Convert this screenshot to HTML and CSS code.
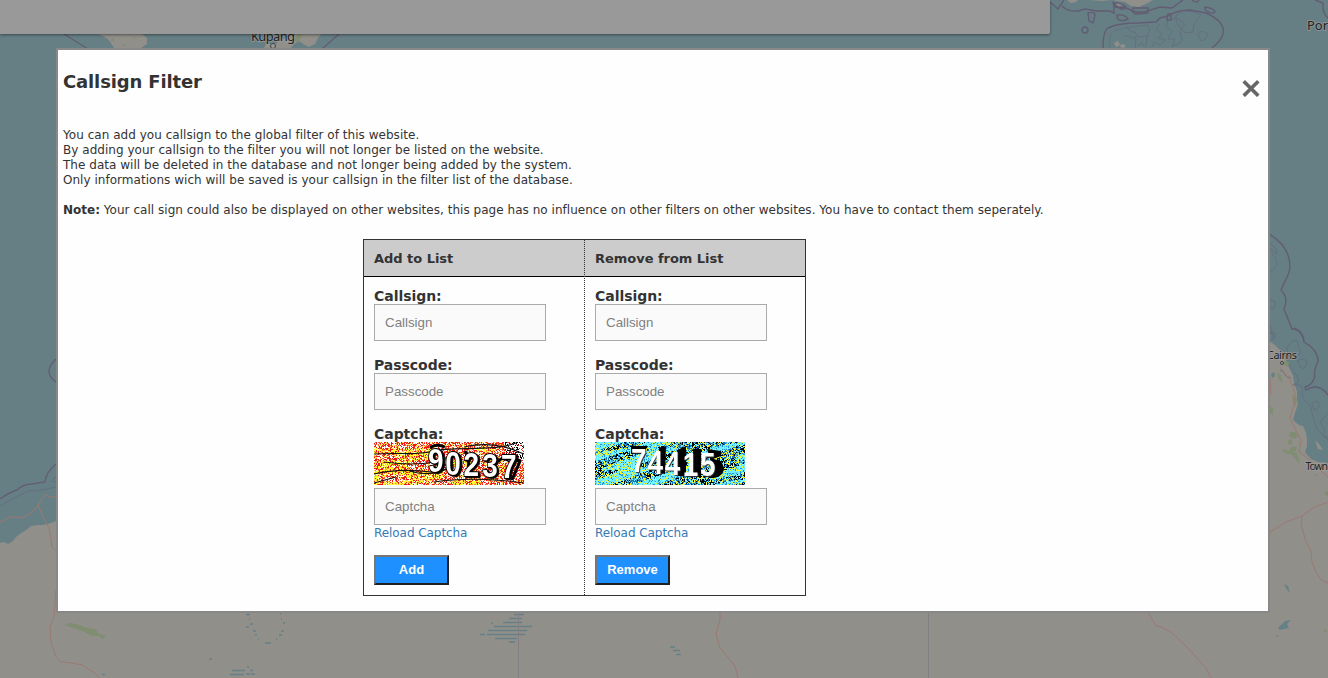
FILE: index.html
```html
<!DOCTYPE html>
<html lang="en">
<head>
<meta charset="utf-8">
<title>Callsign Filter</title>
<link rel="stylesheet" href="styles.css">
</head>
<body>
<svg class="map" viewBox="0 0 1328 678" width="1328" height="678" aria-hidden="true">
  <rect class="sea" width="1328" height="678"/>
  <!-- mainland -->
  <path class="land" d="M0 543 L4 542 8 544 13 541 16 537 20 534 26 530 31 526 37 525 42 525 48 524 56 521 L600 450 L1268 340 L1272 343 1276 346 1280 350 1285 358 1287 364 1291 370 1293 376 1294 383 1297 391 1297 398 1298 404 1295 413 1293 420 1299 425 1304 430 1307 438 1307 446 1305 452 1311 459 1318 462 1328 463 V678 H0Z"/>
  <path class="land" d="M1298 425 l5 1 4 9 -6 -3z M1315 440 l4 4 4 6 -5 -1z"/>
  <!-- northern islands -->
  <path class="land" d="M98 34 L103 36 109 40 114 48 H141 L147 44 147 38 142 34Z M264 48 L266 44 275 44 281 40 289 36 297 32 H323 L318 38 315 44 309 47 303 44 299 41 294 44 291 48Z"/>
  <path class="land" d="M1067 0 l4 3 5-1 2-2z M1088 0 h65 l-5 3-9 4-8-1-6-4-13-2-10 1-14-1z M1114 43 l4-2 2 4-4 2z M1120 45 l4-1 2 3-5 1z M1115 4l6-1 3 2-7 1z"/>
  <path class="green" d="M111 39l3-1 0 3-3 0z M134 36l2 3-3-1z M123 44l4 2-4 0z M298 34l4 0-4 9-4-3z M64 625l7-2 8 2 8 3 8 1 4 5 7 2-4 3-3-3-8 0-6-4-8-3z M1283 449l6 2 8 2 3 10-3-2-5-6-9-3z M1290 432l5 0 3 4-4 3-5-3z M1288 440l4-1 0 6-4-1z M1291 447l6-1-1 5-7 1z M1270 407l3 0 0 8-3-2z M1325 491l3 0 0 5-3-1z M1314 475l3-1 0 2z M1323 629l5 2-3 1z M1277 372l4 4 2 8-5-6z M1284 361l5 1-1 5-4-2z M1292 394l5 5-1 8-3-4z"/>
  <!-- lakes -->
  <path class="lake" d="M1284 584l4 2 2 7-4-5z M1278 628l7-7 6-1-4 4 2 4-9 2z M1276 635l3 1-2 1z M1271 374l3-2 1 4-3 2z"/>
  <path class="lake-dash" d="M246 614.500h4 M249 619h1 M250 624h3 M246 627h3 M253 631h3 M255 635h2 M258 639h1 M265 643h6 M276 639h1 M279 635h3 M281 631h3 M283 623h2 M281 619h1 M280 614h1 M209 659h3 M247 667h2 M232 670.500h13 M250 670.500h3 M230 674.500h14 M246 674h4 M251 674h4 M102 674.500h3"/>
  <path class="lake-dash" d="M514 614.500h10 M509 618.500h13 M503 622.500h19 M491 623h2 M494 626.500h38 M488 630.500h39 M480 634.500h5 M487 634.500h38 M495 638.500h22 M509 642h6"/>
  <path class="lake-dash" d="M670 647h5 M673 650.500h7 M676 654.500h5"/>
  <!-- maritime boundaries -->
  <g class="boundary">
    <path d="M64 34 L88 49 M322 49 L339 34 M56 359 Q49 365 49 372 Q50 378 56 382 M0 499 Q10 492 17 490 Q23 484 32 484 L45 482 Q46 472 56 464"/>
    <path d="M1050 2 L1058 9 1064 0 M1062 6 Q1068 12 1078 11 L1085 9 1097 11 1110 11 1114 13 1114 3 Q1121 12 1126 8 L1136 12 1144 12 1160 7 1172 8 1183 0"/>
    <path d="M1103 48 Q1103 31 1108 28 Q1118 23 1138 23 L1156 22 1160 18 1168 16 Q1177 10 1190 10 L1206 13 Q1226 22 1223 34 Q1221 41 1212 48"/>
    <path d="M1088 13 q7-2 7 2 l-2 8-4-2zM1082 30a3 3 0 1 0 6 0a3 3 0 1 0-6 0 M1117 15q8-1 11 4q-9 4-11-2z M1113 3q8-1 13 4q-8 1-11 0z M1133 8h15v5l-13 1-3-3z M1205 7q9 1 10 5q-4 3-10-2z M1192 0q5 4 7 0 M1168 14h3v6h-4z M1315 0 L1323 3 Q1322 13 1328 18"/>
    <path d="M1269 234 Q1290 246 1290 267 Q1289 275 1285 281 L1281 290 Q1289 298 1284 309 L1290 324 1292 329 Q1301 328 1304 340"/>
    <path d="M1294 328 Q1303 332 1304 342 Q1318 350 1318 361 Q1313 373 1315 376 Q1312 386 1305 387 L1306 390 Q1319 382 1328 395"/>
  </g>
  <g class="reef">
    <path d="M0 506 L14 498 28 491 42 490 56 487 M56 477 q-4 1-3 4q1 2 3 1"/>
    <path d="M1110 48 Q1108 34 1114 31 L1130 27 1148 25 1150 31 1147 35 1146 46 M1124 37q5-3 7 1l5-1-1 11 M1127 26q2 7 8 6l3 5 11-1 M1138 46q5-6 6 1 M1160 24l-4 5 6 5-4 4 8 2-6 5-6-3-2 5 M1168 20l-2 7 6 4-4 8 7 0-3 8 10-6-2-10 5-7-8-6z M1176 15q12-6 20-2l5 2-7 9-1 8-8 1-4-5q-6-4-5-13z M1198 34q3-5 10 0q-2 6-7 7z"/>
    <path d="M1270 243q8 7 7 11q-3 0-7-6 M1272 254q6 5 4 12l-6 7 M1270 300q7 0 5 6q-2 5-5 2 M1270 325l3 10 2 2-3 3 M1269 330l5 7M1287 348q4-8 10-8l2 8 2 5-7 6-6-3z M1297 361q8-4 10 1q-1 8-6 6z M1290 365q0 9 6 9l3 7-6 4q12-2 9 7q0 8 8 13q3 13 7 24l11 11 M1312 404q3-5 7-1q1 6-5 7z M1328 413l-8 9 5 8-2 5 5 3 M1270 333q7-2 5 4l-5 3 M1280 370q4 1 6 6l5 2"/>
  </g>
  <!-- roads -->
  <g class="road">
    <path d="M0 522 L5 520 10 517 17 517 22 518 31 513 37 507 43 498 46 494 49 497 56 497 M38 505 L42 515 49 528 51 540 52 547 56 551 M56 590 L54 616 50 627 51 642 56 657 61 662 72 663 82 665 93 672 100 678"/>
    <path d="M720 612 L720 620 716 634 720 648 735 666 738 678 M1148 612 L1156 626 1161 627 1171 632 1188 648 1206 668 1211 678"/>
    <path d="M1270 532 L1286 522 1302 516 1313 508 1328 502 M1302 516 L1301 524 1306 542 1311 551 1312 562 1316 572 1321 580 1328 583 M1280 367 L1290 380 1295 393 1295 402 1290 418 1296 431 1301 440 1299 452 1310 460 1322 472 1328 477 M1270 378 l1 17"/>
  </g>
  <path class="state-line" d="M518.500 612V678M928.500 612V678"/>
  <g class="place">
    <text x="251" y="41" font-size="13" textLength="44">Kupang</text>
    <text x="1307" y="30" font-size="13">Por</text>
    <text x="1267" y="359" font-size="11" textLength="30">Cairns</text>
    <text x="1305.500" y="470" font-size="10.500" textLength="22.500">Town</text>
  </g>
  <circle class="dot" cx="273" cy="46" r="2.500"/><circle class="dot" cx="1282" cy="363" r="1.500"/>
</svg>
<div class="topbar"></div>
<main class="modal">
  <header class="modal-head">
    <h1>Callsign Filter</h1>
    <svg class="close" viewBox="0 0 18 18" width="18" height="18" role="img" aria-label="Close"><path d="M1.700 2.200 16.300 16.800M16.300 2.200 1.700 16.800"/></svg>
  </header>
  <p class="intro">You can add you callsign to the global filter of this website.<br>By adding your callsign to the filter you will not longer be listed on the website.<br>The data will be deleted in the database and not longer being added by the system.<br>Only informations wich will be saved is your callsign in the filter list of the database.<br><br><b>Note:</b> Your call sign could also be displayed on other websites, this page has no influence on other filters on other websites. You have to contact them seperately.</p>
  <div class="lists">
    <section class="list">
      <h2>Add to List</h2>
      <form class="fields">
        <label>Callsign:</label><input placeholder="Callsign">
        <label>Passcode:</label><input placeholder="Passcode">
        <label>Captcha:</label>
        <div class="captcha">
          <canvas width="150" height="43" data-kind="warm"></canvas>
          <svg class="code" viewBox="0 0 150 43" width="150" height="43">
            <path class="scratch" d="M0 12C30 10 40 14 60 9S120 10 142 1M10 20Q40 24 60 20M0 32Q25 26 58 30M0 41L22 35M35 29Q60 36 78 24M90 5Q120-2 150 12M60 40Q100 34 150 41"/>
            <path class="swash" d="M56 6Q62 1 71 5M92 32Q98 20 91 9M124 20Q132 10 146 19L138 38"/>
            <text class="warm" x="66 87 109 132 155" y="30 33 34 35 36" transform="scale(.82 1)">90237</text>
          </svg>
        </div>
        <input placeholder="Captcha">
        <a>Reload Captcha</a>
        <button type="button">Add</button>
      </form>
    </section>
    <section class="list">
      <h2>Remove from List</h2>
      <form class="fields">
        <label>Callsign:</label><input placeholder="Callsign">
        <label>Passcode:</label><input placeholder="Passcode">
        <label>Captcha:</label>
        <div class="captcha">
          <canvas width="150" height="43" data-kind="cool"></canvas>
          <svg class="code" viewBox="0 0 150 43" width="150" height="43">
            <path class="shadow" d="M36 4H53L48 12H36ZM64 6L71 4 70 32 64 31ZM82 8L91 4V34H83ZM98 7H106V35H98ZM112 7L126 9V14L118 17Q128 18 129 26Q128 37 113 36L119 29Z"/>
            <text class="cool" x="44 64 85 107 128" y="30 32 33 34 34" transform="scale(.82 1)">74415</text>
          </svg>
        </div>
        <input placeholder="Captcha">
        <a>Reload Captcha</a>
        <button type="button">Remove</button>
      </form>
    </section>
  </div>
</main>
<script src="captcha.js"></script>
</body>
</html>
```
FILE: styles.css
```css
* { box-sizing: border-box; }
body {
  margin: 0;
  height: 678px;
  overflow: hidden;
  font: 12px/15px Verdana, "DejaVu Sans", sans-serif;
  color: #333;
}
.map { position: absolute; top: 0; left: 0; }
.sea { fill: #667f85; }
.land { fill: #908f8a; }
.green { fill: #7f8d70; }
.lake { fill: #668087; }
.lake-dash { fill: none; stroke: #668087; stroke-width: 1.6; }
.boundary { fill: none; stroke: #635d73; stroke-width: 1.4; }
.reef { fill: none; stroke: #63687b; stroke-width: .7; }
.road { fill: none; stroke: #9b7970; stroke-width: 1; }
.state-line { stroke: #827e82; stroke-width: 1; }
.place { font-family: "Noto Sans", sans-serif; fill: #222; stroke: #a0a0a0; stroke-width: 2px; stroke-opacity: .6; paint-order: stroke; }
.dot { fill: #999; stroke: #444; stroke-width: 1; }
.topbar {
  position: absolute;
  top: 0;
  left: 0;
  width: 1050px;
  height: 34px;
  background: #999;
  border-radius: 0 0 2px 0;
  box-shadow: 0 1px 3px rgba(0, 0, 0, .45);
}
.modal {
  position: relative;
  width: 1214px;
  height: 565px;
  margin: 48px 0 0 56px;
  padding: 0 5px;
  border: 2px solid #888;
  background: #fefefe;
}
.modal-head { display: flex; justify-content: space-between; height: 78px; padding: 21px 3px 0 0; }
h1 { margin: 0; font-size: 18px; line-height: 22px; letter-spacing: -.14px; }
.close { margin-top: 8px; fill: none; stroke: #666; stroke-width: 3.6; }
.intro { margin: 0; letter-spacing: .032px; }
.intro b { letter-spacing: 0; }
.lists {
  display: grid;
  grid-template-columns: 221px 220px;
  width: 443px;
  height: 357px;
  margin: 21px 0 0 300px;
  border: 1px solid #333;
}
.list + .list { border-left: 1px dotted #333; margin-left: -1px; }
h2 {
  height: 37px;
  margin: 0;
  padding: 0 10px;
  border-bottom: 1px solid #000;
  background: #ccc;
  font-size: 13px;
  line-height: 37px;
  letter-spacing: -.03px;
}
.fields { display: flex; flex-direction: column; align-items: flex-start; padding: 10px; }
label { height: 17px; font-size: 14px; font-weight: bold; line-height: 18px; letter-spacing: -.04px; }
input {
  width: 172px;
  height: 37px;
  margin: 0 0 15px;
  padding: 0 10px;
  border: 1px solid #aaa;
  background: #fafafa;
  font: 13.333px "Liberation Sans", Arial, sans-serif;
}
input::placeholder { color: #808080; opacity: 1; }
.captcha { position: relative; width: 150px; height: 43px; margin: 0 0 3px; }
.captcha canvas { display: block; }
.code { position: absolute; inset: 0; overflow: hidden; }
.code text { font: bold 34px "Liberation Sans", sans-serif; fill: #fff; stroke: #000; stroke-width: 2px; paint-order: stroke; }
.warm { text-shadow: 2px 1px 1px #000; }
.code .cool { stroke: none; text-shadow: 1px 1px 1px #333; }
.scratch { fill: none; stroke: #111; stroke-width: 1.1; }
.swash { fill: none; stroke: #000; stroke-width: 3; }
.shadow { fill: #000; }
.captcha + input { margin-bottom: 0; }
a { color: #337ab7; height: 30px; line-height: 16px; letter-spacing: -.06px; }
button {
  width: 75px;
  height: 30px;
  padding: 0 0 2px;
  border: 2px solid;
  border-color: #767676 #212121 #212121 #767676;
  background: #1e90ff;
  color: #fff;
  font: bold 13px "Liberation Sans", Arial, sans-serif;
}
```
FILE: captcha.js
```js
// Fills each captcha canvas with speckled noise from a fixed seed.
const palettes = {
  warm: [
    ["#ffff22", "#ffff50", "#ffffff", "#ffd040", "#ff8a20", "#f01515", "#f01515", "#ffff22"],
    ["#f01515", "#ffffff", "#f01515", "#ffffff", "#ff6030", "#ffe050"],
    ["#ffffff", "#ffffff", "#ffffff", "#000000", "#e03030"]
  ],
  cool: [
    ["#72f2ff", "#72f2ff", "#72f2ff", "#60dcef", "#2090d0", "#ffff22"],
    ["#72f2ff", "#0878cc", "#2070a0", "#000000", "#ffff22", "#50b0d0"],
    ["#000000", "#000000", "#0878cc", "#ffff22", "#72f2ff"]
  ]
};

function pickGroup(kind, x, y) {
  if (kind === "warm") {
    if (x > 130 && y < 20) return 2;
    const blotch = Math.sin(x / 9 + y / 4) + Math.sin(y / 3 - x / 17);
    return y > 5 && blotch + (60 - x) / 50 > 0 ? 0 : 1;
  }
  const streak = Math.sin((y + x * 0.27) * 0.5) + Math.sin(x / 9 + y / 6) + Math.sin(x / 23) * 0.5;
  if (streak > 0.2) return 0;
  return Math.sin(x / 7 - y / 5) > 0.4 ? 2 : 1;
}

document.querySelectorAll("canvas").forEach((canvas, index) => {
  const kind = canvas.dataset.kind;
  const context = canvas.getContext("2d");
  let seed = 71 + index;
  for (let y = 0; y < 43; y++) {
    for (let x = 0; x < 150; x++) {
      const colors = palettes[kind][pickGroup(kind, x, y)];
      seed = (seed * 1664525 + 1013904223) % 4294967296;
      context.fillStyle = colors[Math.floor(seed / 4294967296 * colors.length)];
      context.fillRect(x, y, 1, 1);
    }
  }
});
```
